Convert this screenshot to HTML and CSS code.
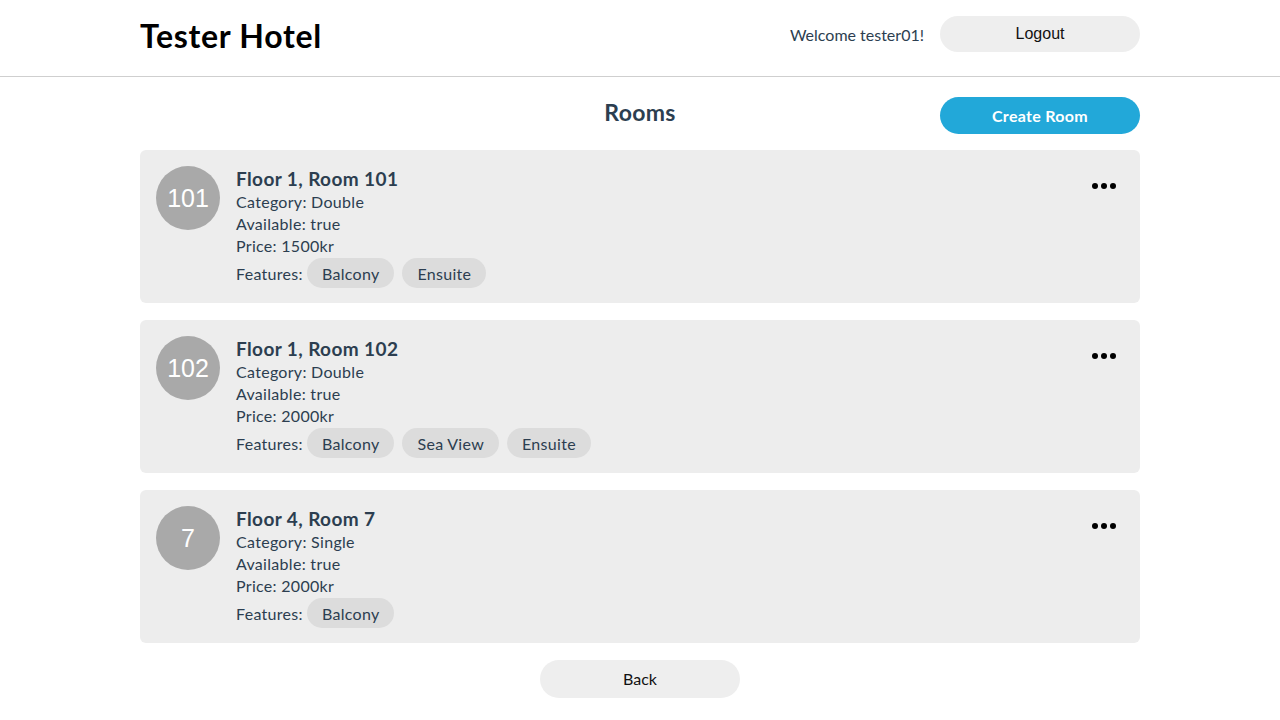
FILE: index.html
```html
<!DOCTYPE html>
<html>
<head>
<meta charset="utf-8">
<link rel="stylesheet" href="styles.css">
</head>
<body>
<header class="topbar">
  <div class="topbar-inner">
    <h1 class="brand">Tester Hotel</h1>
    <div class="user">
      <span class="welcome">Welcome tester01!</span>
      <button class="btn btn-grey btn-logout">Logout</button>
    </div>
  </div>
</header>
<main class="main">
  <div class="page-head">
    <h2 class="page-title">Rooms</h2>
    <button class="btn btn-blue">Create Room</button>
  </div>

  <div class="card">
    <div class="avatar">101</div>
    <div class="info">
      <div class="room-title">Floor 1, Room 101</div>
      <div class="line">Category: Double</div>
      <div class="line">Available: true</div>
      <div class="line">Price: 1500kr</div>
      <div class="features">Features: <span class="chip">Balcony</span><span class="chip">Ensuite</span></div>
    </div>
    <div class="menu"><span></span><span></span><span></span></div>
  </div>

  <div class="card">
    <div class="avatar">102</div>
    <div class="info">
      <div class="room-title">Floor 1, Room 102</div>
      <div class="line">Category: Double</div>
      <div class="line">Available: true</div>
      <div class="line">Price: 2000kr</div>
      <div class="features">Features: <span class="chip">Balcony</span><span class="chip">Sea View</span><span class="chip">Ensuite</span></div>
    </div>
    <div class="menu"><span></span><span></span><span></span></div>
  </div>

  <div class="card">
    <div class="avatar">7</div>
    <div class="info">
      <div class="room-title">Floor 4, Room 7</div>
      <div class="line">Category: Single</div>
      <div class="line">Available: true</div>
      <div class="line">Price: 2000kr</div>
      <div class="features">Features: <span class="chip">Balcony</span></div>
    </div>
    <div class="menu"><span></span><span></span><span></span></div>
  </div>

  <div class="back-row">
    <button class="btn btn-grey btn-back">Back</button>
  </div>
</main>
</body>
</html>
```

FILE: styles.css
```css
* { box-sizing: border-box; }
html, body { margin: 0; padding: 0; background: #fff; }
body { font-family: Lato, "Noto Sans", sans-serif; color: #2c3e50; }

.topbar { border-bottom: 1px solid #cfcfcf; height: 77px; }
.topbar-inner {
  width: 1000px; margin: 0 auto; height: 76px; padding-bottom: 8px;
  display: flex; align-items: center; justify-content: space-between;
}
.brand { margin: 0; font-size: 32px; font-weight: 700; color: #000; letter-spacing: 0.7px; padding-top: 3px; }
.user { display: flex; align-items: center; gap: 16px; }
.welcome { font-size: 16px; color: #2c3e50; }

.btn {
  border: none; border-radius: 19px; width: 200px; cursor: pointer;
  font-family: Lato, "Noto Sans", sans-serif;
}
.btn-grey { background: #eeeeee; color: #111; font-size: 16px; }
.btn-logout { height: 36px; font-family: "Liberation Sans", Arial, sans-serif; padding-top: 1px; }
.btn-blue { background: #22a8d9; color: #fff; height: 37px; font-size: 16px; font-weight: 700; letter-spacing: 0.3px; padding-bottom: 2px; }

.main { width: 1000px; margin: 0 auto; }
.page-head {
  position: relative; display: flex; justify-content: flex-end; align-items: center;
  margin-top: 20px; margin-bottom: 16px;
}
.page-title {
  position: absolute; left: 0; right: 0; text-align: center; margin: 0;
  font-size: 23px; font-weight: 700; color: #2c3e50; top: 1px; letter-spacing: 0.3px;
}

.card {
  background: #ededed; border-radius: 6px; display: flex; align-items: flex-start;
  padding: 16px 24px 15px 16px; margin-bottom: 17px; height: 153px;
}
.avatar {
  width: 64px; height: 64px; border-radius: 50%; background: #a9a9a9; color: #fff;
  display: flex; align-items: center; justify-content: center; flex-shrink: 0;
  font-family: "Liberation Sans", Arial, sans-serif; font-size: 25px;
}
.info { flex: 1; margin-left: 16px; margin-top: 0; font-size: 16px; letter-spacing: 0.3px; }
.room-title { font-size: 19px; font-weight: 700; line-height: 25px; letter-spacing: 0.4px; }
.line { line-height: 22px; }
.features { display: flex; align-items: center; margin-top: 1px; }
.chip {
  display: inline-flex; align-items: center; height: 30px; padding: 0 15px;
  background: #dcdcdc; border-radius: 15px; margin-left: 8px;
}
.features .chip:first-child { margin-left: 4px; }
.menu { display: flex; gap: 3px; margin-top: 17px; }
.menu span { width: 6px; height: 6px; border-radius: 50%; background: #000; }

.back-row { display: flex; justify-content: center; }
.btn-back { height: 38px; font-size: 16px; padding-bottom: 3px; }
```
